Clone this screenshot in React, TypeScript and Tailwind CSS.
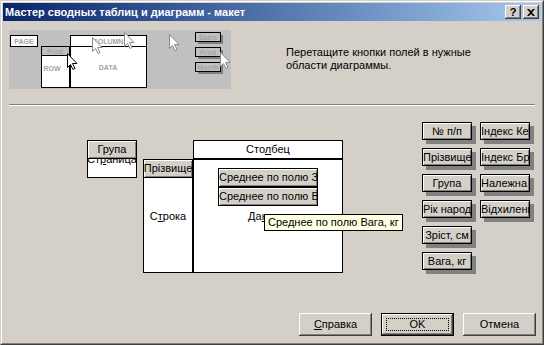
import React from 'react';

// classic 3d button look
const raised =
  'bg-[#d4d0c8] shadow-[inset_-1px_-1px_#404040,inset_1px_1px_#ffffff,inset_-2px_-2px_#808080,inset_2px_2px_#d4d0c8]';

// pivot field button: black frame + bevel
const fieldBtn =
  'bg-[#d4d0c8] border border-black shadow-[inset_1px_1px_#ffffff,inset_-1px_-1px_#808080]';

const fieldBtnShadow =
  'bg-[#d4d0c8] border border-black shadow-[inset_1px_1px_#ffffff,inset_-1px_-1px_#808080,4px_4px_0_#808080]';

// column-major: left column first, then right column
const fields = [
  '№ п/п',
  'Прізвище',
  'Група',
  'Рік народження',
  'Зріст, см',
  'Вага, кг',
  'Індекс Кетле',
  'Індекс Брока',
  'Належна вага',
  'Відхилення',
];

function Cursor({ x, y, dark }: { x: number; y: number; dark?: boolean }) {
  return (
    <path
      transform={`translate(${x} ${y})`}
      d="M0.5 0.5V14.5L3.5 11.5L6 16.5L8 15.5L5.5 10.5H10Z"
      fill="#ffffff"
      stroke={dark ? '#000000' : '#8c8c8c'}
    />
  );
}

function Preview() {
  const label = {
    fontSize: 7,
    fontWeight: 700,
    fill: '#a4a4a4',
    textAnchor: 'middle' as const,
    fontFamily: 'Liberation Sans, sans-serif',
  };
  return (
    <svg width="222" height="59" className="block">
      <rect width="222" height="59" fill="#c0c0c0" />
      {/* page */}
      <rect x="1.5" y="5.5" width="27" height="11" fill="#fff" stroke="#000" />
      <text x="15" y="14" {...label}>PAGE</text>
      {/* column */}
      <rect x="61.5" y="5.5" width="76" height="11" fill="#fff" stroke="#000" />
      <text x="99" y="14" {...label}>COLUMN</text>
      {/* data */}
      <rect x="61.5" y="16.5" width="76" height="41" fill="#fff" stroke="#000" />
      <text x="99" y="40" {...label}>DATA</text>
      {/* row */}
      <rect x="32.5" y="16.5" width="28" height="41" fill="#fff" stroke="#000" />
      <rect x="32.5" y="16.5" width="28" height="9" fill="#c0c0c0" stroke="#000" />
      <text x="46" y="24" {...label}>Prod</text>
      <text x="43" y="41" {...label}>ROW</text>
      {/* field list */}
      {[
        ['Sales', 2],
        ['Prod', 17],
        ['Month', 32],
      ].map(([t, y]) => (
        <g key={t as string}>
          <rect x="189" y={(y as number) + 3} width="25" height="9" fill="#808080" />
          <rect x="186.5" y={(y as number) + 0.5} width="25" height="9" fill="#c0c0c0" stroke="#000" />
          <text x="199" y={(y as number) + 8} {...label}>{t}</text>
        </g>
      ))}
      <Cursor x={83} y={7} />
      <Cursor x={115} y={2} />
      <Cursor x={160} y={4} />
      <Cursor x={58} y={23} dark />
      <Cursor x={211} y={22} />
    </svg>
  );
}

function Btn({ children, def }: { children: React.ReactNode; def?: boolean }) {
  if (def) {
    return (
      <div className="w-[73px] h-[23px] border border-black">
        <div className={`h-full ${raised} flex items-center justify-center`}>
          <div className="w-[63px] h-[13px] border border-dotted border-black flex items-center justify-center leading-none">
            {children}
          </div>
        </div>
      </div>
    );
  }
  return (
    <div className={`w-[73px] h-[23px] ${raised} flex items-center justify-center leading-none`}>
      {children}
    </div>
  );
}

export default function App() {
  return (
    <div className="w-[544px] h-[345px] bg-[#d4d0c8] border border-t-[#d4d0c8] border-l-[#d4d0c8] border-r-[#404040] border-b-[#404040] font-['Liberation_Sans',Arial,sans-serif] text-[11px] text-black">
      <div className="h-full border border-t-white border-l-white border-r-[#808080] border-b-[#808080] p-px flex flex-col">
        {/* Title bar */}
        <div className="h-[18px] flex items-center bg-linear-to-r from-[#0a246a] to-[#a6caf0] pl-[2px] pr-[2px]">
          <span className="text-white font-bold text-[11px] flex-1 whitespace-nowrap">
            Мастер сводных таблиц и диаграмм - макет
          </span>
          <div className={`w-[16px] h-[14px] ${raised} flex items-center justify-center font-bold text-[11px] leading-none`}>
            ?
          </div>
          <div className={`w-[16px] h-[14px] ml-[2px] ${raised} flex items-center justify-center`}>
            <svg width="8" height="7" viewBox="0 0 8 7">
              <path d="M0 0h2l2 2 2-2h2L5 3.5 8 7H6L4 5 2 7H0l3-3.5z" fill="#000" />
            </svg>
          </div>
        </div>

        {/* Top: preview + hint */}
        <div className="flex pl-[6px] pt-[9px]">
          <Preview />
          <div className="ml-[55px] mt-[16px] leading-[13px]">
            Перетащите кнопки полей в нужные
            <br />
            области диаграммы.
          </div>
        </div>

        {/* separator */}
        <div className="mx-[6px] mt-[15px] h-[2px] border-t border-t-[#808080] border-b border-b-white" />

        {/* Layout area */}
        <div className="relative flex items-start pl-[84px]">
          {/* Страница */}
          <div className="relative mt-[34px] w-[50px] h-[38px] bg-white border border-black flex items-center justify-center">
            <span className="whitespace-nowrap">
              Ст<span className="underline">р</span>аница
            </span>
            <div className={`absolute -left-px -top-px -right-px h-[19px] ${fieldBtn} flex items-center justify-center`}>
              Група
            </div>
          </div>

          {/* Pivot */}
          <div className="ml-[6px] mt-[34px] flex">
            <div className="relative mt-[19px] w-[50px] h-[114px] bg-white border border-black flex items-center justify-center">
              <span>
                С<span className="underline">т</span>рока
              </span>
              <div className={`absolute -left-px -top-px -right-px h-[19px] ${fieldBtn} flex items-center justify-center whitespace-nowrap overflow-hidden`}>
                Прізвище
              </div>
            </div>
            <div className="flex flex-col w-[150px]">
              <div className="h-[19px] bg-white border border-black flex items-center justify-center">
                <span>
                  Сто<span className="underline">л</span>бец
                </span>
              </div>
              <div className="relative h-[114px] bg-white border border-black flex items-center justify-center">
                <span>
                  Да<span className="underline">н</span>ные
                </span>
                <div className="absolute left-[24px] top-[8px] flex flex-col">
                  <div className={`w-[100px] h-[19px] ${fieldBtn} flex items-center whitespace-nowrap overflow-hidden`}>
                    Среднее по полю Зріст, см
                  </div>
                  <div className={`w-[100px] h-[19px] ${fieldBtn} flex items-center whitespace-nowrap overflow-hidden`}>
                    Среднее по полю Вага, кг
                  </div>
                </div>
              </div>
            </div>
          </div>

          {/* Field list */}
          <div className="ml-[79px] mt-[16px] grid grid-flow-col grid-rows-[repeat(6,18px)] grid-cols-[50px_50px] gap-x-[8px] gap-y-[8px]">
            {fields.map((f, i) => (
              <div key={i} className={`${fieldBtnShadow} leading-[16px] text-center whitespace-nowrap overflow-hidden`}>
                {f}
              </div>
            ))}
          </div>

          {/* tooltip */}
          <div className="absolute left-[261px] top-[108px] h-[17px] bg-[#ffffe1] border border-black px-[3px] leading-[15px] whitespace-nowrap">
            Среднее по полю Вага, кг
          </div>
        </div>

        {/* Buttons */}
        <div className="mt-auto flex justify-end gap-[9px] pr-[5px] pb-[6px]">
          <Btn>
            <span>
              <span className="underline">С</span>правка
            </span>
          </Btn>
          <Btn def>OK</Btn>
          <Btn>Отмена</Btn>
        </div>
      </div>
    </div>
  );
}
